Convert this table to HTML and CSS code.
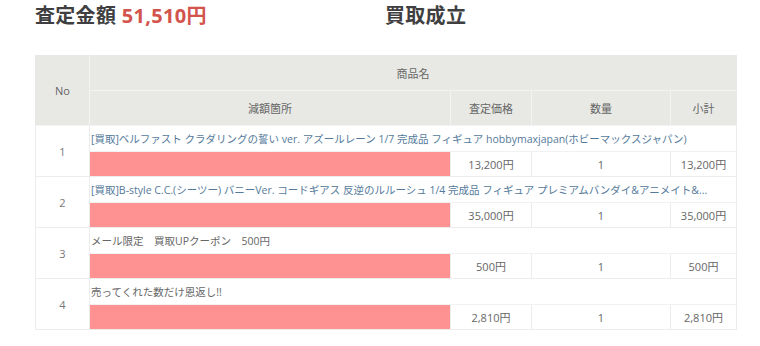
FILE: index.html
```html
<!DOCTYPE html>
<html lang="ja">
<head>
<meta charset="utf-8">
<title>査定結果</title>
<link rel="stylesheet" href="styles.css">
</head>
<body>
<div class="page">
  <div class="summary">
    <h2 class="total">査定金額 <span class="amount">51,510円</span></h2>
    <h2 class="status">買取成立</h2>
  </div>
  <table class="items">
    <colgroup>
      <col class="c-no"><col class="c-part"><col class="c-price"><col class="c-qty"><col class="c-sub">
    </colgroup>
    <thead>
      <tr class="h1">
        <th rowspan="2">No</th>
        <th colspan="4">商品名</th>
      </tr>
      <tr class="h2">
        <th>減額箇所</th>
        <th>査定価格</th>
        <th>数量</th>
        <th>小計</th>
      </tr>
    </thead>
    <tbody>
      <tr class="name-row">
        <td rowspan="2" class="no">1</td>
        <td colspan="4" class="name"><a href="#">[買取]ベルファスト クラダリングの誓い ver. アズールレーン 1/7 完成品 フィギュア hobbymaxjapan(ホビーマックスジャパン)</a></td>
      </tr>
      <tr class="val-row">
        <td class="part"></td><td>13,200円</td><td>1</td><td>13,200円</td>
      </tr>
      <tr class="name-row">
        <td rowspan="2" class="no">2</td>
        <td colspan="4" class="name"><a href="#">[買取]B-style C.C.(シーツー) バニーVer. コードギアス 反逆のルルーシュ 1/4 完成品 フィギュア プレミアムバンダイ&amp;アニメイト&amp;...</a></td>
      </tr>
      <tr class="val-row">
        <td class="part"></td><td>35,000円</td><td>1</td><td>35,000円</td>
      </tr>
      <tr class="name-row">
        <td rowspan="2" class="no">3</td>
        <td colspan="4" class="name">メール限定　買取UPクーポン　500円</td>
      </tr>
      <tr class="val-row">
        <td class="part"></td><td>500円</td><td>1</td><td>500円</td>
      </tr>
      <tr class="name-row">
        <td rowspan="2" class="no">4</td>
        <td colspan="4" class="name">売ってくれた数だけ恩返し!!</td>
      </tr>
      <tr class="val-row">
        <td class="part"></td><td>2,810円</td><td>1</td><td>2,810円</td>
      </tr>
    </tbody>
  </table>
</div>
</body>
</html>
```
FILE: styles.css
```css
html, body {
  margin: 0;
  padding: 0;
  background: #ffffff;
}
body {
  font-family: "Open Sans", "Noto Sans CJK JP", sans-serif;
  color: #666666;
}
.page {
  padding: 0 24px 0 35px;
}
.summary {
  display: grid;
  grid-template-columns: 350px auto;
  height: 55px;
}
.summary h2 {
  margin: 0;
  padding-top: 2px;
  font-size: 20px;
  line-height: 28px;
  font-weight: 700;
  color: #3f3f42;
  letter-spacing: 0.3px;
}
.amount {
  color: #d2544c;
}
.items {
  width: 701px;
  border-collapse: collapse;
  table-layout: fixed;
  font-size: 11px;
}
.c-no { width: 54px; }
.c-part { width: 361px; }
.c-price { width: 81px; }
.c-qty { width: 139px; }
.c-sub { width: 66px; }
.items th {
  background: #e8e9e5;
  font-weight: 400;
  color: #666666;
  border: 1px solid #f3f4f1;
  padding: 0;
  text-align: center;
}
.items .h1 th { height: 34px; }
.items .h2 th { height: 34px; }
.items thead tr:first-child th { border-top-color: #e8e9e5; }
.items thead th:first-child { border-left-color: #e8e9e5; }
.items thead tr:first-child th:last-child,
.items .h2 th:last-child { border-right-color: #e8e9e5; }
.items td {
  border: 1px solid #ececec;
  padding: 0;
  text-align: center;
  color: #666666;
}
.items .no {
  color: #777777;
}
.name-row td.name {
  height: 25px;
  text-align: left;
  padding-left: 1px;
  font-size: 10.5px;
  white-space: nowrap;
  overflow: hidden;
  border-bottom-color: #f2f2f2;
}
.name a {
  color: #54799a;
  text-decoration: none;
}
.val-row td {
  height: 24px;
}
.val-row td.part {
  background: #fe9191;
}
```
